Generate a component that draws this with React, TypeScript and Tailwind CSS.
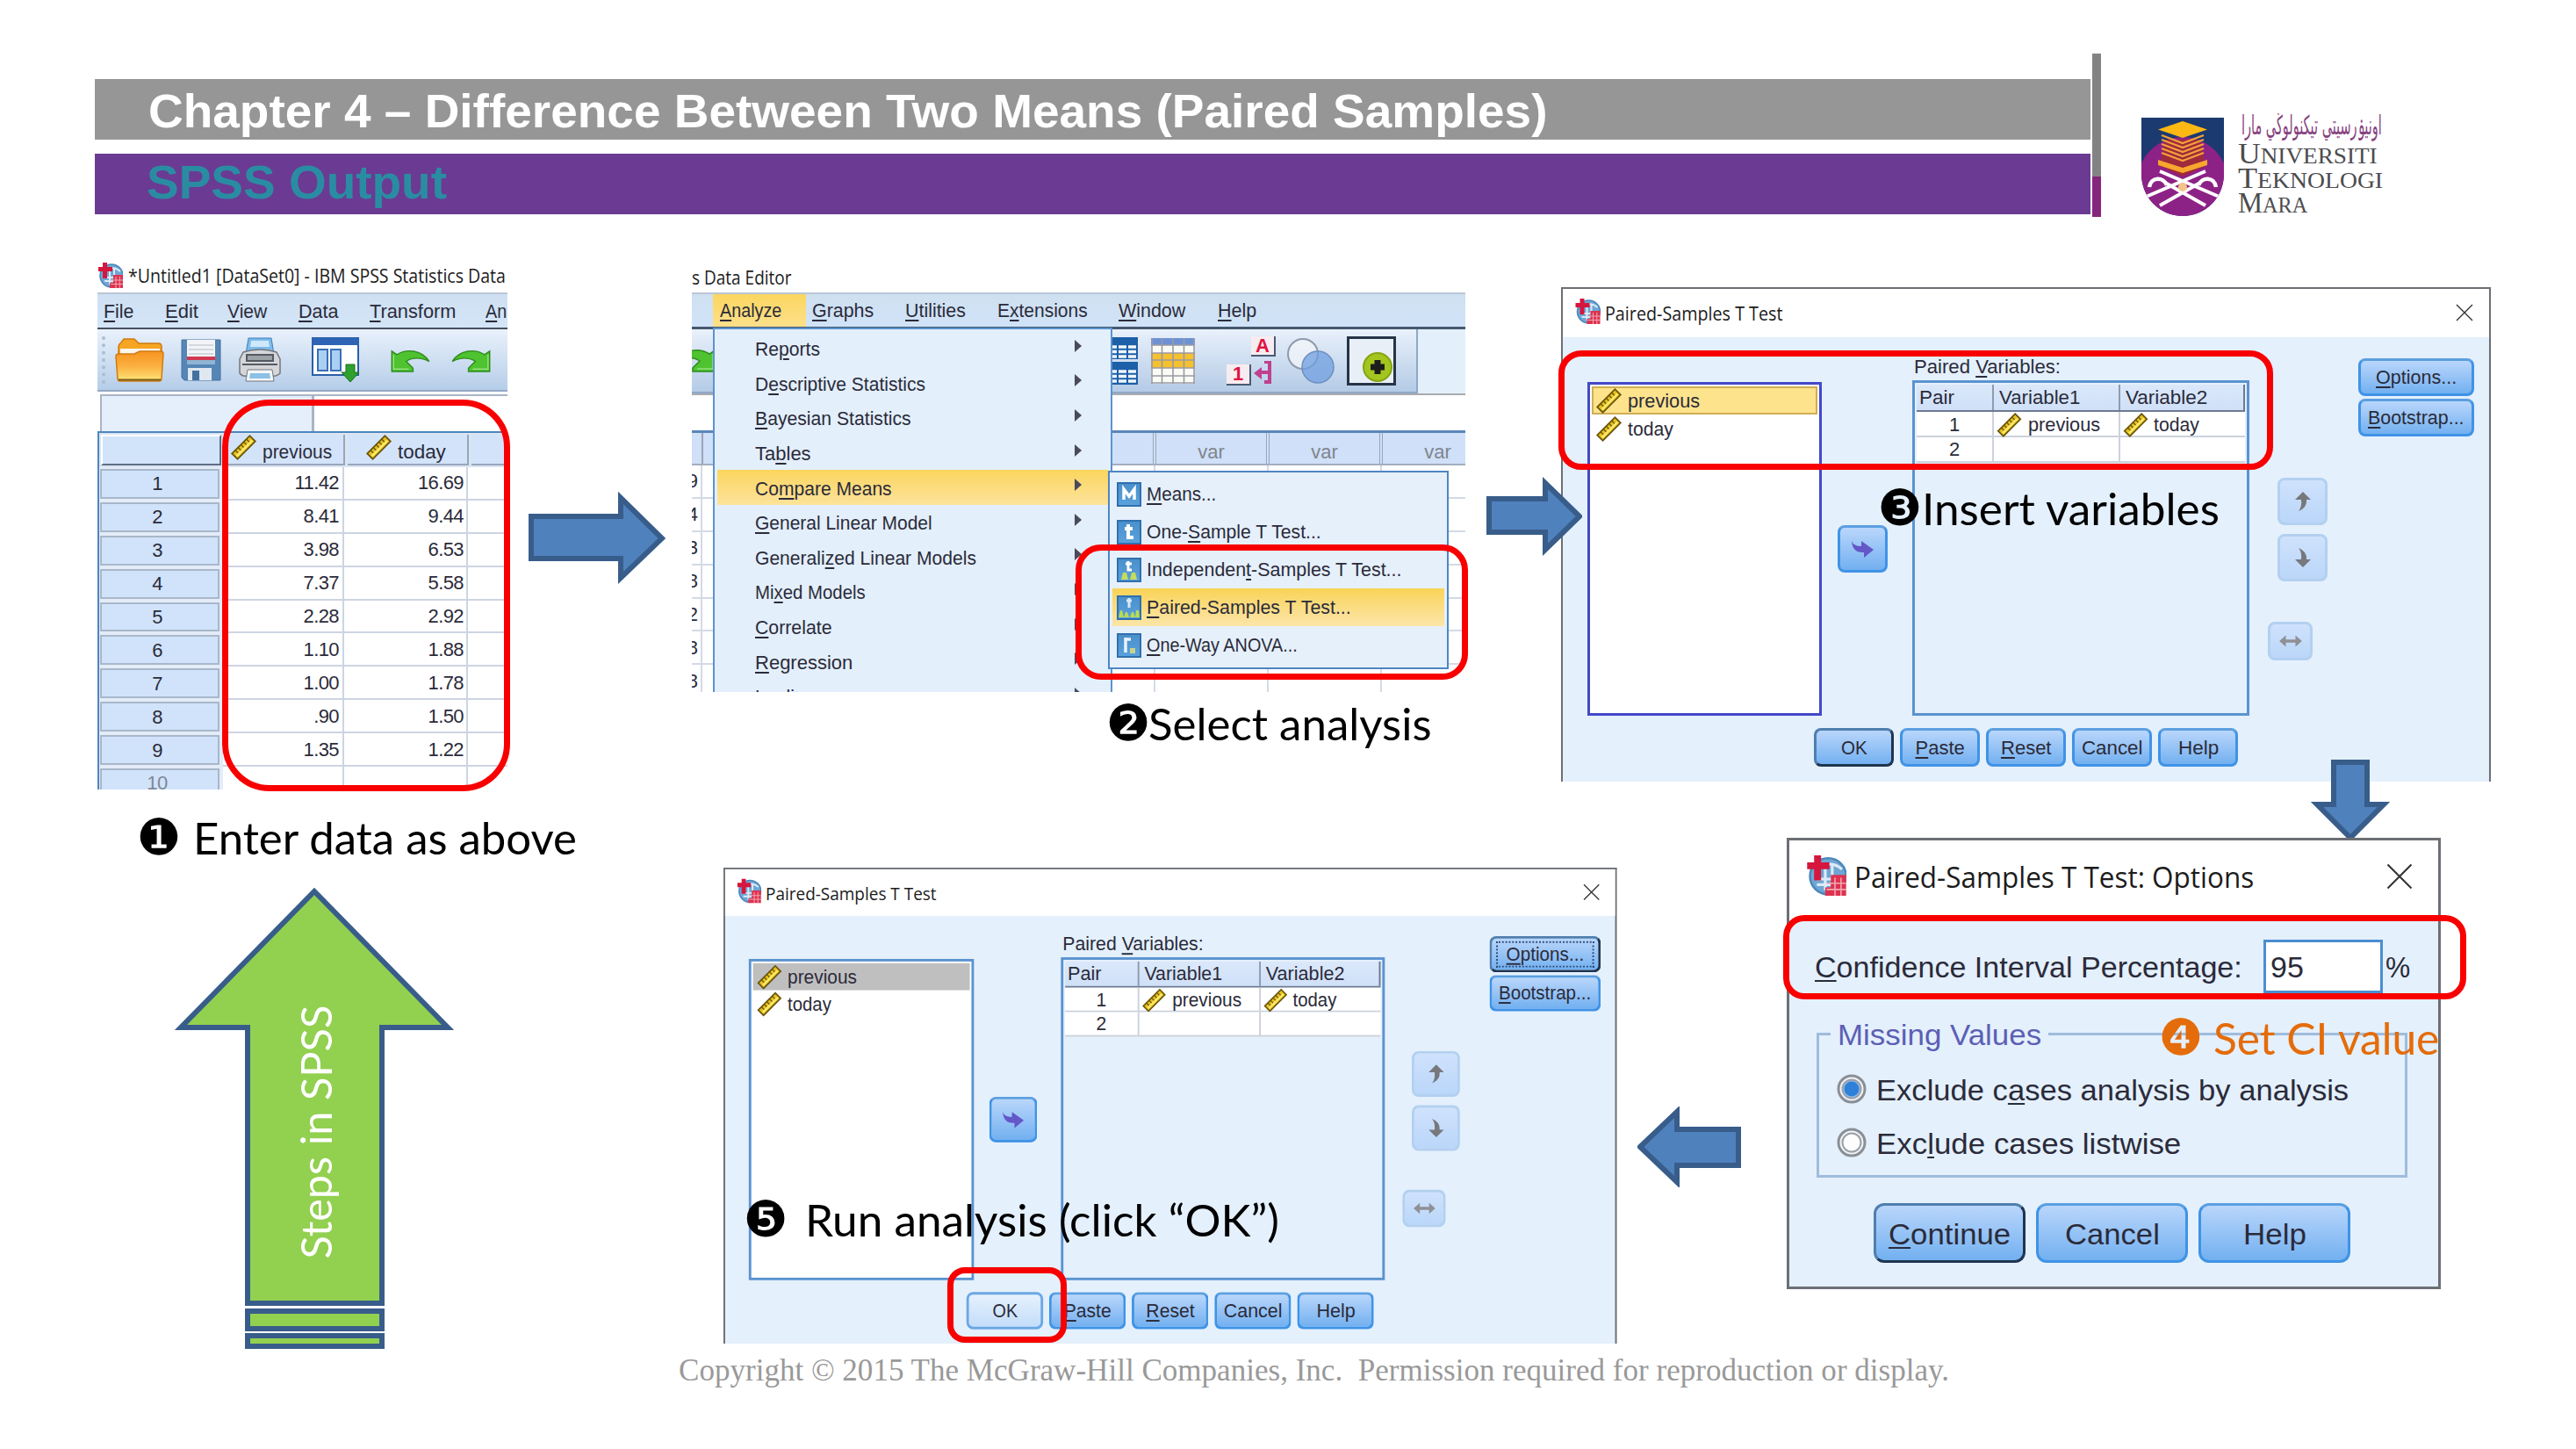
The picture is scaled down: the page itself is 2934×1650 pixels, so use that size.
import { useLayoutEffect, useRef, type ReactNode } from "react";

const SPSS = "font-['Liberation_Sans',Arial,sans-serif] text-[#2b2b3a]";
const WIN = "font-['Open_Sans','Noto_Sans',sans-serif] text-[#1c1c1c]";
const NOTE = "font-['Lato',sans-serif] text-[51px] leading-[60px]";

/* Stretches or squeezes a single line of text to the width of its box. */
function Fit({ className = "", children }: { className?: string; children: ReactNode }) {
  const box = useRef<HTMLSpanElement>(null);
  const line = useRef<HTMLSpanElement>(null);
  useLayoutEffect(() => {
    if (box.current && line.current) {
      const k = box.current.clientWidth / line.current.offsetWidth;
      line.current.style.transform = `scaleX(${k})`;
    }
  }, []);
  return (
    <span ref={box} className={`block shrink-0 whitespace-nowrap ${className}`}>
      <span ref={line} className="inline-block origin-left whitespace-pre">
        {children}
      </span>
    </span>
  );
}

/* Text whose letter after "&" is the underlined keyboard mnemonic. */
function Key({ t }: { t: string }) {
  const i = t.indexOf("&");
  if (i < 0) return <>{t}</>;
  return (
    <>
      {t.slice(0, i)}
      <span className="underline decoration-2 underline-offset-[3px]">{t[i + 1]}</span>
      {t.slice(i + 2)}
    </>
  );
}

function AppIcon({ className }: { className: string }) {
  return (
    <svg viewBox="0 0 28 29" className={`shrink-0 ${className}`}>
      <circle cx="15" cy="15" r="13" fill="#6ea6d4" stroke="#4a86ba" strokeWidth="1.5" />
      <path d="M8 9q9-6 17 1M7 17h12M7 21h10M13 9v16M18 7v9" stroke="#dcebf7" strokeWidth="2" fill="none" />
      <path d="M5 0h5v5h6v5h-6v8H5v-8H0V5h5z" fill="#d5163d" />
      <path d="M17 14h11v15H13v-6h4z" fill="#dd3350" />
      <path d="M14 20h14M14 24.500h14M20 16v13M24.300 16v13" stroke="#f5a6b2" strokeWidth="1" />
    </svg>
  );
}

function Ruler({ className = "h-[28px] w-[28px]" }: { className?: string }) {
  return (
    <svg viewBox="0 0 28 28" className={`shrink-0 overflow-visible ${className}`}>
      <g transform="rotate(-45 14 14)">
        <rect x="-2" y="9" width="32" height="10" fill="#e6c01e" stroke="#6b560c" strokeWidth="2" />
        <rect x="0" y="14" width="28" height="3" fill="#fbe96a" />
        <path d="M4 9v5M9 9v5M14 9v5M19 9v5M24 9v5" stroke="#6b560c" strokeWidth="1.5" />
      </g>
    </svg>
  );
}

function CloseX({ className }: { className: string }) {
  return (
    <svg viewBox="0 0 20 20" className={`shrink-0 ${className}`}>
      <path d="M1 1l18 18M19 1L1 19" stroke="#333" strokeWidth="1.4" />
    </svg>
  );
}

function BlockArrow({ className, box, points }: { className: string; box: string; points: string }) {
  return (
    <svg viewBox={box} className={`shrink-0 ${className}`}>
      <polygon points={points} fill="#4f81bd" stroke="#385d8a" strokeWidth="6" strokeLinejoin="miter" />
    </svg>
  );
}

function Undo({ flip = false, className }: { flip?: boolean; className: string }) {
  return (
    <svg viewBox="0 0 46 28" className={`shrink-0 ${flip ? "-scale-x-100" : ""} ${className}`}>
      <path d="M1 2l6 4C18-1 36 0 45 14 36 9 25 9 18 14l8 8v4H1z" fill="#4ec32f" stroke="#2e8c1d" strokeWidth="1.5" />
      <path d="M3 6v17h18" stroke="#93e07c" strokeWidth="1.500" fill="none" />
    </svg>
  );
}

const data: [string, string][] = [
  ["11.42", "16.69"],
  ["8.41", "9.44"],
  ["3.98", "6.53"],
  ["7.37", "5.58"],
  ["2.28", "2.92"],
  ["1.10", "1.88"],
  ["1.00", "1.78"],
  [".90", "1.50"],
  ["1.35", "1.22"],
  ["", ""],
];

function Folder() {
  return (
    <svg viewBox="0 0 56 50" className="h-[50px] w-[56px]">
      <defs>
        <linearGradient id="fold" x1="0" y1="0" x2="0" y2="1">
          <stop offset="0" stopColor="#f79420" />
          <stop offset=".5" stopColor="#fbb040" />
          <stop offset="1" stopColor="#fde67a" />
        </linearGradient>
      </defs>
      <path d="M4 10q0-3 3-5l3-4h12l5 5h23q3 0 3 4v12H4z" fill="#f6a623" stroke="#d07b12" strokeWidth="1.5" />
      <path d="M6 12h45v12H6z" fill="#fbf6ee" />
      <path d="M1 21q0-3 3-3h18l6-3h24q3 0 3 3l-2 28q0 3-3 3H6q-3 0-3-3z" fill="url(#fold)" stroke="#d07b12" strokeWidth="1.5" />
      <path d="M4 47.500h48" stroke="#7b5a16" strokeWidth="2" />
    </svg>
  );
}
function Floppy() {
  return (
    <svg viewBox="0 0 46 48" className="h-[48px] w-[46px]">
      <path d="M1 1h44v46H4l-3-3z" fill="#5586b5" stroke="#44719f" />
      <rect x="7" y="1" width="32" height="26" fill="#f2f4f7" />
      <path d="M9 7h28M9 12h28M9 17h28" stroke="#c9ced6" strokeWidth="1.500" />
      <rect x="7" y="20" width="32" height="4" fill="#d23752" />
      <rect x="7" y="24" width="32" height="5" fill="#8fb4d4" />
      <rect x="8" y="33" width="27" height="14" fill="#dfe8f0" />
      <rect x="13" y="36" width="8" height="11" fill="#44719f" />
    </svg>
  );
}
function Printer() {
  return (
    <svg viewBox="0 0 48 52" className="h-[52px] w-[48px]">
      <path d="M11 1h26l3 18H8z" fill="#7cbbec" stroke="#3f7fb5" />
      <path d="M14 4h20l1 7H13z" fill="#cfe8fa" />
      <path d="M5 17q19-6 38 0l4 8v16q-4 4-8 3H9q-5 1-8-3V25z" fill="#d4d6da" stroke="#74777d" strokeWidth="1.500" />
      <path d="M9 20h30v7H9zM4 31h40" stroke="#555a62" strokeWidth="2" fill="#9da1a8" />
      <path d="M10 37h28l2 13H8z" fill="#f4f6f8" stroke="#74777d" />
      <path d="M13 41h22l1 6H12z" fill="#8cc0e6" />
    </svg>
  );
}
function DataIcon() {
  return (
    <svg viewBox="0 0 56 52" className="h-[52px] w-[56px]">
      <rect x="1" y="1" width="52" height="42" fill="#fff" stroke="#2c5fa8" strokeWidth="2" />
      <rect x="1" y="1" width="52" height="8" fill="#2f63b5" />
      <path d="M7 14h11v24H7zM22 14h11v24H22z" fill="#a9cff3" stroke="#3b6fb8" strokeWidth="2" />
      <path d="M39 31h10v9h5L44 51 34 40h5z" fill="#2ea12e" stroke="#1c6f1c" />
    </svg>
  );
}

function DataEditor() {
  const menu = ["&File", "&Edit", "&View", "&Data", "&Transform", "&Analyze"];
  const w = ["w-[70px]", "w-[71px]", "w-[81px]", "w-[81px]", "w-[132px]", "w-[100px]"];
  const t = ["w-[34px]", "w-[38px]", "w-[45px]", "w-[45px]", "w-[98px]", "w-[70px]"];
  return (
    <div className="relative h-[606px] w-[467px]">
      <div className="flex h-full w-full flex-col overflow-hidden">
        <div className="flex h-[40px] shrink-0 items-center gap-[6px] pl-px">
          <AppIcon className="h-[29px] w-[28px]" />
          <Fit className={`${WIN} w-[430px] pt-[2px] text-[21px] leading-[30px]`}>*Untitled1 [DataSet0] - IBM SPSS Statistics Data</Fit>
        </div>
        <div className={`${SPSS} flex h-[42px] shrink-0 items-center border-t-2 border-b-2 border-t-[#b9c6d6] border-b-[#45505f] bg-gradient-to-b from-[#cfe0f2] to-[#d3e5f8] pl-[7px] text-[22px]`}>
          {menu.map((m, i) => (
            <div key={m} className={`shrink-0 ${w[i]}`}>
              <Fit className={t[i]}>
                <Key t={m} />
              </Fit>
            </div>
          ))}
        </div>
        <div className="flex h-[71px] shrink-0 items-center border-b-2 border-[#94a8c4] bg-gradient-to-b from-[#e9f1fb] to-[#b6cee9]">
          <div className="ml-[5px] h-[54px] w-[4px] border-l-4 border-dotted border-[#a9bdd4]" />
          <div className="ml-[11px] flex items-center">
            <Folder />
            <span className="w-[19px]" />
            <Floppy />
            <span className="w-[20px]" />
            <Printer />
            <span className="w-[35px]" />
            <DataIcon />
            <span className="w-[33px]" />
            <Undo className="mt-1 h-[27px] w-[47px]" />
            <span className="w-[22px]" />
            <Undo flip className="mt-1 h-[27px] w-[47px]" />
          </div>
        </div>
        <div className="flex h-[45px] shrink-0 pt-[3px]">
          <div className="ml-[3px] w-[243px] border-2 border-b-0 border-[#aab4c4] bg-[#e5effb]" />
          <div className="flex-1 border-t-2 border-l border-[#aab4c4] bg-white" />
        </div>
        <div className={`${SPSS} flex flex-col border-t-2 border-l-2 border-[#4d86bd] bg-white text-[22px]`}>
          <div className="flex h-[39px] shrink-0 bg-[#dbe5f2]">
            <div className="my-[2px] ml-[2px] w-[137px] border-2 border-t-white border-r-[#5f6e86] border-b-[#5f6e86] border-l-white bg-[#d2e4fa]" />
            <div className="my-[2px] ml-[5px] flex w-[136px] items-center border-r-2 border-b-2 border-[#98a6bb] bg-[#d3e4fa] pt-[6px] pl-[8px]">
              <Ruler className="mt-[-10px] h-[25px] w-[25px]" />
              <Fit className="ml-[9px] w-[79px]">previous</Fit>
            </div>
            <div className="my-[2px] ml-[3px] flex w-[138px] items-center border-r-2 border-b-2 border-[#98a6bb] bg-[#d3e4fa] pt-[6px] pl-[23px]">
              <Ruler className="mt-[-10px] h-[25px] w-[25px]" />
              <Fit className="ml-[9px] w-[55px]">today</Fit>
            </div>
            <div className="my-[2px] ml-[3px] flex-1 border-b-2 border-[#98a6bb] bg-[#d3e4fa]" />
          </div>
          {data.map(([a, b], i) => (
            <div key={i} className="flex h-[37.900px] shrink-0 tracking-[-0.6px]">
              <div className="w-[141px] bg-[#e3ecf7] py-[2px] pr-[4px] pl-px">
                <div className={`flex h-full items-center justify-center border-2 border-[#a9b7cb] bg-[#d0e3fa] pr-[6px] ${i === 9 ? "text-[#7d8796]" : ""}`}>{i + 1}</div>
              </div>
              <div className="flex w-[138px] items-center justify-end border-r-2 border-b-2 border-[#cdd4e2] pr-[4px]">{a}</div>
              <div className="flex w-[141px] items-center justify-end border-r-2 border-b-2 border-[#cdd4e2] pr-[3px]">{b}</div>
              <div className="flex-1 border-b-2 border-[#cdd4e2]" />
            </div>
          ))}
        </div>
      </div>
      <div className="absolute top-[162px] left-[142px] h-[446px] w-[328px] rounded-[54px] border-[7px] border-[#f80000]" />
    </div>
  );
}

function TableIcon({ kind }: { kind: "blue" | "gold" }) {
  return kind === "blue" ? (
    <svg viewBox="0 0 29 54" className="h-[54px] w-[29px]">
      <rect width="29" height="25" fill="#1d5fa8" />
      <rect y="28" width="29" height="26" fill="#1d5fa8" />
      {[11, 16.500, 22, 39, 44.500, 50].map((y) => (
        <path key={y} d={`M0 ${y}h5M7 ${y}h9M18 ${y}h9`} stroke="#eef5fc" strokeWidth="3.400" />
      ))}
    </svg>
  ) : (
    <svg viewBox="0 0 50 52" className="h-[52px] w-[50px]">
      <rect width="50" height="52" fill="#fbfbf6" />
      <rect width="50" height="8" fill="#6e92d6" />
      <rect y="17" width="50" height="17" fill="#f5c12e" />
      <path d="M0 8h50M0 17h50M0 25h50M0 34h50M0 43h50M1 0v52M12.500 0v52M25 0v52M37.500 0v52M49 0v52M0 51h50" stroke="#9a9aa5" strokeWidth="1.600" />
    </svg>
  );
}

const analyze = [
  "Re&ports",
  "D&escriptive Statistics",
  "&Bayesian Statistics",
  "Ta&bles",
  "Co&mpare Means",
  "&General Linear Model",
  "Generali&zed Linear Models",
  "Mi&xed Models",
  "&Correlate",
  "&Regression",
  "L&oglinear",
];
const analyzeW = ["w-[74px]", "w-[194px]", "w-[178px]", "w-[64px]", "w-[156px]", "w-[202px]", "w-[252px]", "w-[126px]", "w-[87px]", "w-[111px]", "w-[88px]"];
const tests = ["&Means...", "One-&Sample T Test...", "Independen&t-Samples T Test...", "&Paired-Samples T Test...", "&One-Way ANOVA..."];
const testsW = ["w-[79px]", "w-[199px]", "w-[290px]", "w-[233px]", "w-[172px]"];

function TestIcon({ n }: { n: number }) {
  return (
    <svg viewBox="0 0 28 28" className="h-[28px] w-[28px] shrink-0">
      <defs>
        <linearGradient id="ti" x1="0" y1="0" x2="0" y2="1">
          <stop offset="0" stopColor="#4a8fc9" />
          <stop offset="1" stopColor="#5aa2dc" />
        </linearGradient>
      </defs>
      <rect x="1" y="1" width="26" height="26" fill="url(#ti)" stroke="#3070ae" strokeWidth="2" />
      {n === 0 && <path d="M8 20V8l6 8 6-8v12" fill="none" stroke="#fff" strokeWidth="3.500" />}
      {n === 1 && <path d="M13 5v15h6M9 10h9" fill="none" stroke="#fff" strokeWidth="4" />}
      {n === 2 && (
        <>
          <path d="M13 4v10h4M10 7h7" fill="none" stroke="#fff" strokeWidth="3" />
          <path d="M5 25l2-8h4l2 8zM15 25l2-8h4l2 8z" fill="#c6dd5a" />
        </>
      )}
      {n === 3 && (
        <>
          <path d="M14 3v11M11 6h6" fill="none" stroke="#d7e9f7" strokeWidth="3" />
          <path d="M2 25l2-8h2l2 8zM8 25l2-6h2l2 6zM15 25l2-6h2l2 6zM21 25l1-8h3l1 8z" fill="#b9dc50" />
        </>
      )}
      {n === 4 && (
        <>
          <path d="M10 5v17M10 7h6" fill="none" stroke="#e8f3fb" strokeWidth="3.500" />
          <rect x="15" y="17" width="6" height="6" fill="#c9d58a" />
        </>
      )}
    </svg>
  );
}

function AnalyzeMenu() {
  return (
    <div className="relative h-[491px] w-[881px]">
      <div className={`${SPSS} relative flex h-full w-full flex-col overflow-hidden bg-white text-[22px]`}>
        <div className="flex h-[36px] shrink-0 items-center">
          <Fit className={`${WIN} w-[114px] pt-px text-[21px] leading-[30px]`}>s Data Editor</Fit>
        </div>
        <div className="flex h-[42px] shrink-0 items-stretch border-t-2 border-b-[3px] border-t-[#b9c6d6] border-b-[#45586f] bg-gradient-to-b from-[#cfe0f0] to-[#d0e3f8] leading-[37px]">
          <div className="ml-[24px] w-[106px] bg-gradient-to-b from-[#fbd65e] to-[#fde08a] pl-[8px]">
            <Fit className="w-[70px]"><Key t="&Analyze" /></Fit>
          </div>
          <div className="w-[113px] pl-[7px]"><Fit className="w-[70px]"><Key t="&Graphs" /></Fit></div>
          <div className="w-[105px]"><Fit className="w-[69px]"><Key t="&Utilities" /></Fit></div>
          <div className="w-[138px]"><Fit className="w-[103px]"><Key t="E&xtensions" /></Fit></div>
          <div className="w-[113px]"><Fit className="w-[76px]"><Key t="&Window" /></Fit></div>
          <div><Fit className="w-[44px]"><Key t="&Help" /></Fit></div>
        </div>
        <div className="flex h-[73px] shrink-0 bg-[#e3effb]">
          <div className="flex w-[827px] items-center border-r-2 border-b-2 border-[#8fa8c8] bg-gradient-to-b from-[#e9f1fb] to-[#b4cbe6]">
            <Undo flip className="ml-[-20px] h-[28px] w-[48px]" />
            <div className="ml-[451px] flex items-center">
              <TableIcon kind="blue" />
              <span className="w-[15px]" />
              <TableIcon kind="gold" />
              <span className="w-[36px]" />
              <div className="relative h-[56px] w-[56px] font-bold text-[#e0123f]">
                <div className="absolute top-0 right-0 flex h-[23px] w-[28px] items-center justify-center border-r-2 border-b-2 border-[#4b5a73] bg-[#f7ecf0]">A</div>
                <div className="absolute bottom-0 left-0 flex h-[24px] w-[28px] items-center justify-center border-r-2 border-b-2 border-[#4b5a73] bg-[#f7ecf0]">1</div>
                <svg viewBox="0 0 22 26" className="absolute right-[4px] bottom-[2px] h-[26px] w-[22px]">
                  <path d="M13 1h6v23h-6M19 13H9" fill="none" stroke="#c0408f" strokeWidth="4" />
                  <path d="M10 7v14L1 14z" fill="#c0408f" />
                </svg>
              </div>
              <svg viewBox="0 0 54 52" className="ml-[13px] h-[52px] w-[54px]">
                <circle cx="18" cy="18" r="17" fill="#f3f6fa" fillOpacity=".7" stroke="#8e99ab" strokeWidth="2" />
                <circle cx="35" cy="33" r="18" fill="#6f9fe0" fillOpacity=".75" stroke="#6d8fbd" strokeWidth="1.500" />
              </svg>
              <svg viewBox="0 0 56 56" className="ml-[14px] h-[56px] w-[56px]">
                <rect x="1.500" y="1.500" width="53" height="53" fill="#e9eff7" stroke="#263447" strokeWidth="3" />
                <circle cx="35" cy="35" r="16" fill="#a3c61e" stroke="#86a414" strokeWidth="2" />
                <path d="M35 27v16M27 35h16" stroke="#1d1d1d" strokeWidth="7" />
              </svg>
            </div>
          </div>
        </div>
        <div className="h-[45px] shrink-0 border-t-2 border-b-[3px] border-t-[#a9a9b0] border-b-[#5b86b8] bg-white" />
        <div className="flex h-[37px] shrink-0 border-b-2 border-[#a3aec0] bg-[#cfe0f8] text-[#80858e]">
          <div className="w-[13px] shrink-0 border-r-2 border-[#9aa5b8]" />
          <div className="w-[516px] shrink-0 border-r-4 border-double border-[#9aa5b8]" />
          {[0, 1, 2].map((i) => (
            <div key={i} className="flex w-[129px] shrink-0 items-center justify-center border-r-4 border-double border-[#9aa5b8] pt-2">
              var
            </div>
          ))}
        </div>
        {data.slice(0, 7).map(([, b], i) => (
          <div key={b} className="flex h-[37.900px] shrink-0">
            <div className="flex w-[10px] shrink-0 items-center justify-end overflow-hidden border-b-2 border-[#d3dae6] pr-[3px] whitespace-nowrap">{b}</div>
            <div className="w-[518px] shrink-0 border-r-2 border-b-2 border-l-2 border-[#d3dae6]" />
            <div className="w-[129px] shrink-0 border-r-2 border-b-2 border-[#d3dae6]" />
            <div className="w-[129px] shrink-0 border-r-2 border-b-2 border-[#d3dae6]" />
            <div className="flex-1 border-b-2 border-[#d3dae6]" />
          </div>
        ))}

        <div className="absolute top-[76px] left-[24px] w-[455px] border-2 border-[#5c93cf] bg-[#e3effb] px-[3px] pt-[2px]">
          {analyze.map((t, i) => (
            <div
              key={t}
              className={`flex h-[39.600px] items-center justify-between pr-[30px] pl-[43px] ${i === 4 ? "bg-gradient-to-b from-[#fbd55c] to-[#fde39a]" : ""}`}
            >
              <Fit className={`${analyzeW[i]} pt-[2px]`}>
                <Key t={t} />
              </Fit>
              <svg viewBox="0 0 8 14" className="mt-[-6px] h-[14px] w-[8px]">
                <path d="M0 0l8 7-8 7z" fill="#4a4a5a" />
              </svg>
            </div>
          ))}
        </div>

        <div className="absolute top-[239px] left-[474px] h-[226px] w-[388px] border-2 border-[#4f86c2] bg-[#e6f0fb] px-[3px] pt-[3px]">
          {tests.map((t, i) => (
            <div key={t} className={`flex h-[43px] items-center gap-[6px] pl-[5px] ${i === 3 ? "bg-gradient-to-b from-[#f9d354] to-[#fce6a8]" : ""}`}>
              <TestIcon n={i} />
              <Fit className={testsW[i]}>
                <Key t={t} />
              </Fit>
            </div>
          ))}
        </div>
      </div>
      <div className="absolute top-[323px] left-[437px] h-[154px] w-[447px] rounded-[29px] border-[7px] border-[#f80000]" />
    </div>
  );
}

const BTN = "flex shrink-0 items-center justify-center rounded-[8px] border-[3px]";
const BLUE = "border-[#3f93e6] border-t-[#5b9fe0] bg-gradient-to-b from-[#b9d6fb] to-[#72b0f0]";
const DARK = "border-[#4f7fae] border-r-[#1f3550] border-b-[#1f3550] bg-gradient-to-b from-[#b9d6fb] to-[#72b0f0]";
const PALE = "border-[#b3d0f0] bg-gradient-to-b from-[#cfe2fc] to-[#bad6f9]";

function PushArrow({ dir, className }: { dir: "up" | "down" | "right" | "both"; className: string }) {
  return (
    <svg viewBox="0 0 28 24" className={className}>
      {dir === "right" && <path d="M1 3q2 6 11 6V3l14 10-11 9v-6Q2 17 1 3z" fill="#6457c8" />}
      {dir === "up" && <path d="M14 1l9 9h-5q1 9-9 13 4-5 3-13H5z" fill="#77787c" />}
      {dir === "down" && <path d="M14 23l9-9h-5Q19 5 9 1q4 5 3 13H5z" fill="#77787c" />}
      {dir === "both" && <path d="M0 12l8-7v5h12V5l8 7-8 7v-5H8v5z" fill="#8f9096" />}
    </svg>
  );
}

function PairedDialog({ done = false }: { done?: boolean }) {
  const listBorder = done ? "border-[#5b93d0]" : "border-[#4448c8]";
  const selected = done ? "bg-[#bfbfbf]" : "border-2 border-[#cfae55] bg-[#fde38c]";
  const footW = ["w-[56px]", "w-[57px]", "w-[69px]", "w-[46px]"];
  return (
    <div className={`${SPSS} flex h-[563px] w-[1059px] flex-col border-2 border-b-0 border-[#6c6f74] bg-[#e4f0fc] text-[22px]`}>
      <div className="flex h-[55px] shrink-0 items-start bg-white pl-[14px]">
        <AppIcon className="mt-[11px] h-[29px] w-[29px]" />
        <Fit className={`${WIN} mt-[13px] ml-[5px] w-[203px] text-[21px] leading-[30px]`}>Paired-Samples T Test</Fit>
        <CloseX className="mt-[17px] mr-[18px] ml-auto h-[20px] w-[20px]" />
      </div>
      <div className="flex h-[431px] shrink-0 pl-[28px]">
        <div className={`mt-[51px] w-[267px] shrink-0 border-[3px] ${listBorder} bg-white p-[2px]`}>
          <div className={`flex h-[32px] items-center ${done ? "pl-[7px]" : "pl-[5px]"} ${selected}`}>
            <Ruler className="h-[25px] w-[25px]" />
            <Fit className="ml-[9px] w-[82px]">previous</Fit>
          </div>
          <div className="flex h-[32px] items-center pl-[7px]">
            <Ruler className="h-[25px] w-[25px]" />
            <Fit className="ml-[9px] w-[52px]">today</Fit>
          </div>
        </div>
        <div className={`${BTN} ${BLUE} mt-[214px] ml-[18px] h-[54px] w-[57px]`}>
          <PushArrow dir="right" className="h-[24px] w-[28px]" />
        </div>
        <div className="ml-[28px] flex w-[384px] shrink-0 flex-col">
          <Fit className="mt-[19px] ml-[2px] h-[30px] w-[167px] leading-[30px]">
            <Key t="Paired &Variables:" />
          </Fit>
          <div className="flex-1 border-[3px] border-[#5b93d0] p-[2px]">
            <div className="grid grid-cols-[88px_144px_142px] border-b-2 border-[#6d7b91] bg-gradient-to-b from-[#dbe8fa] to-[#cfe0f8] leading-[29px]">
              <div className="border-r-2 border-[#8e9bb0] pl-[3px]"><Fit className="w-[40px]">Pair</Fit></div>
              <div className="border-r-2 border-[#8e9bb0] pl-[6px]"><Fit className="w-[92px]">Variable1</Fit></div>
              <div className="border-r-2 border-[#6d7b91] pl-[6px]"><Fit className="w-[93px]">Variable2</Fit></div>
            </div>
            <div className="grid h-[29px] grid-cols-[88px_144px_142px] border-b-2 border-[#ccd2dc] bg-white leading-[29px]">
              <div className="border-r-2 border-[#ccd2dc] text-center">1</div>
              <div className="flex items-center border-r-2 border-[#ccd2dc] pl-[5px]">
                <Ruler className="h-[24px] w-[25px]" />
                <Fit className="ml-[9px] w-[82px]">previous</Fit>
              </div>
              <div className="flex items-center pl-[5px]">
                <Ruler className="h-[24px] w-[25px]" />
                <Fit className="ml-[8px] w-[52px]">today</Fit>
              </div>
            </div>
            <div className="grid h-[29px] grid-cols-[88px_144px_142px] border-b-2 border-[#ccd2dc] bg-white leading-[28px]">
              <div className="border-r-2 border-[#ccd2dc] text-center">2</div>
              <div className="border-r-2 border-[#ccd2dc]" />
              <div />
            </div>
          </div>
        </div>
        <div className="ml-[21px] w-[68px] shrink-0 pt-[160px]">
          <div className={`${BTN} ${PALE} ml-[11px] h-[54px] w-[57px]`}>
            <PushArrow dir="up" className="h-[24px] w-[28px]" />
          </div>
          <div className={`${BTN} ${PALE} mt-[10px] ml-[11px] h-[54px] w-[57px]`}>
            <PushArrow dir="down" className="h-[24px] w-[28px]" />
          </div>
          <div className={`${BTN} ${PALE} mt-[46px] h-[44px] w-[51px]`}>
            <PushArrow dir="both" className="h-[22px] w-[28px]" />
          </div>
        </div>
        <div className="ml-[35px] w-[132px] shrink-0 pt-[24px]">
          <div className={`${BTN} ${done ? DARK : BLUE} h-[43px]`}>
            <span className={done ? "flex h-[31px] w-[116px] items-center justify-center border-2 border-dotted border-[#2c4c78]" : ""}>
              <Fit className="w-[92px]"><Key t="&Options..." /></Fit>
            </span>
          </div>
          <div className={`${BTN} ${BLUE} mt-[3px] h-[43px]`}>
            <Fit className="w-[110px]"><Key t="&Bootstrap..." /></Fit>
          </div>
        </div>
      </div>
      <div className="mt-[14px] flex gap-[7px] pl-[286px]">
        <div className={`${BTN} h-[44px] w-[91px] ${done ? "border-[#6ba8e4] bg-gradient-to-b from-[#e6f1fd] to-[#c3ddfa]" : DARK}`}>
          <Fit className="w-[30px]">OK</Fit>
        </div>
        {["&Paste", "&Reset", "Cancel", "Help"].map((t, i) => (
          <div key={t} className={`${BTN} ${BLUE} h-[44px] w-[91px]`}>
            <Fit className={footW[i]}><Key t={t} /></Fit>
          </div>
        ))}
      </div>
    </div>
  );
}

function Radio({ on = false }: { on?: boolean }) {
  return (
    <svg viewBox="0 0 34 34" className="h-[34px] w-[34px] shrink-0">
      <circle cx="17" cy="17" r="15" fill="#f2f4f6" stroke="#8a8f96" strokeWidth="3" />
      <circle cx="17" cy="17" r="10.500" fill={on ? "#8fbdf0" : "#fdfdfd"} stroke="#9aa0a8" strokeWidth="2" />
      {on && <circle cx="17" cy="17" r="8.500" fill="#2f80d8" />}
    </svg>
  );
}

function OptionsDialog() {
  return (
    <div className={`${SPSS} flex h-[514px] w-[745px] flex-col border-[3px] border-[#6c6f74] bg-[#e4f0fc] text-[34px]`}>
      <div className="flex h-[91px] shrink-0 items-start bg-white pl-[20px]">
        <AppIcon className="mt-[17px] h-[46px] w-[45px]" />
        <Fit className={`${WIN} mt-[19px] ml-[9px] w-[455px] text-[32px] leading-[46px]`}>Paired-Samples T Test: Options</Fit>
        <CloseX className="mt-[26px] mr-[29px] ml-auto h-[30px] w-[30px]" />
      </div>
      <div className="mt-[21px] flex h-[62px] shrink-0 items-center pl-[29px]">
        <Fit className="mt-[3px] w-[487px]"><Key t="&Confidence Interval Percentage:" /></Fit>
        <div className="ml-[24px] flex h-[61px] w-[136px] items-center border-[3px] border-[#4a8ed0] bg-white pt-[3px] pl-[5px]">
          <Fit className="w-[38px]">95</Fit>
        </div>
        <Fit className="mt-[3px] ml-[3px] w-[28px]">%</Fit>
      </div>
      <fieldset className="mt-[26px] ml-[31px] h-[184px] w-[673px] shrink-0 border-[3px] border-[#9fbcdc]">
        <legend className="ml-[13px] h-[40px] px-[8px] leading-[43px] text-[#5c5fb4]">
          <Fit className="w-[232px]">Missing Values</Fit>
        </legend>
        <div className="mt-[21px] flex h-[44px] items-center pl-[20px]">
          <Radio on />
          <Fit className="ml-[11px] w-[538px] pt-[2px]"><Key t="Exclude c&ases analysis by analysis" /></Fit>
        </div>
        <div className="mt-[17px] flex h-[44px] items-center pl-[20px]">
          <Radio />
          <Fit className="ml-[11px] w-[347px] pt-[2px]"><Key t="Exc&lude cases listwise" /></Fit>
        </div>
      </fieldset>
      <div className="mt-[29px] flex gap-[12px] pl-[96px]">
        <div className={`${BTN} ${DARK} h-[68px] w-[173px] rounded-[12px]`}><Fit className="w-[139px] pt-[3px]"><Key t="&Continue" /></Fit></div>
        <div className={`${BTN} ${BLUE} h-[68px] w-[173px] rounded-[12px]`}><Fit className="w-[108px] pt-[3px]">Cancel</Fit></div>
        <div className={`${BTN} ${BLUE} h-[68px] w-[173px] rounded-[12px]`}><Fit className="w-[72px] pt-[3px]">Help</Fit></div>
      </div>
    </div>
  );
}

/* Numbered caption: filled circled digit followed by a line of text. */
function Note({ n, gap, width, className = "" }: { n: string; gap: string; width: string; className?: string }) {
  const texts: Record<string, string> = {
    "❶": "Enter data as above",
    "❷": "Select analysis",
    "❸": "Insert variables",
    "❹": "Set CI value",
    "❺": "Run analysis (click “OK”)",
  };
  return (
    <div className={`flex h-[60px] items-center ${NOTE} ${className}`}>
      <span className="flex w-[40px] shrink-0 justify-center pb-[2px] font-['DejaVu_Sans',sans-serif] text-[57px] leading-[60px]">{n}</span>
      <Fit className={`${gap} ${width}`}>{texts[n]}</Fit>
    </div>
  );
}

function Crest() {
  return (
    <svg viewBox="0 0 96 114" className="h-[114px] w-[96px] shrink-0">
      <clipPath id="shield">
        <path d="M1 1h94v64c0 28-22 48-47 48S1 93 1 65z" />
      </clipPath>
      <g clipPath="url(#shield)">
        <rect width="96" height="114" fill="#1b3a70" />
        <circle cx="48" cy="75" r="52" fill="#8d2286" />
        <path d="M28 26h40l6 30-26 12-26-12z" fill="#9e2a3c" />
        {[24, 29, 34, 39, 44].map((y) => (
          <path key={y} d={`M24 ${y - 3}l24 9 24-9`} fill="none" stroke="#f4a03a" strokeWidth="2.200" />
        ))}
        <path d="M20 49l28 9 28-9v6l-28 9-28-9z" fill="#f7a62e" />
        <path d="M20 14.500L48 5l28 9.500L48 24z" fill="#fdb813" />
        <path d="M4 92l70-30M92 92L22 62M22 101l46-26M74 101L28 75" stroke="#fff" strokeWidth="4" fill="none" />
        <path d="M10 80c2-12 16-12 20-2M86 80c-2-12-16-12-20-2" stroke="#fff" strokeWidth="4.500" fill="none" />
        <circle cx="48" cy="80" r="5" fill="#f3c58a" />
      </g>
    </svg>
  );
}

function Header() {
  return (
    <header className="flex h-[293px] shrink-0 items-start pl-[108px]">
      <div className="mt-[90px] w-[2273px] shrink-0 font-['Liberation_Sans',Arial,sans-serif] text-[54px] font-bold">
        <div className="h-[69px] bg-[#969696] pl-[61px] leading-[73px] text-white">
          <Fit className="w-[1593px]">Chapter 4 – Difference Between Two Means (Paired Samples)</Fit>
        </div>
        <div className="mt-[16px] h-[69px] bg-[#6b3a93] pl-[59px] leading-[65px] text-[#2a8ca3]">
          <Fit className="w-[342px]">SPSS Output</Fit>
        </div>
      </div>
      <div className="mt-[61px] ml-[2px] w-[10px] shrink-0">
        <div className="h-[140px] bg-[#838383]" />
        <div className="h-[46px] bg-[#86257c]" />
      </div>
      <div className="mt-[133px] ml-[45px] flex">
        <Crest />
        <div className="mt-[-6px] ml-[15px] font-['Liberation_Serif',serif] text-[#4c4c4f]">
          <Fit className="ml-[4px] h-[34px] w-[160px] font-['DejaVu_Sans',sans-serif] text-[30px] leading-[32px] text-[#87417f]">اونيۏرسيتي تيكنولوڬي مارا</Fit>
          <Fit className="h-[28px] w-[159px] text-[26px] leading-[28px]"><span className="text-[34px] leading-[28px]">U</span>NIVERSITI</Fit>
          <Fit className="h-[28px] w-[165px] text-[26px] leading-[28px]"><span className="text-[34px] leading-[28px]">T</span>EKNOLOGI</Fit>
          <Fit className="h-[28px] w-[79px] text-[26px] leading-[28px]"><span className="text-[34px] leading-[28px]">M</span>ARA</Fit>
        </div>
      </div>
    </header>
  );
}

function StepsArrow() {
  return (
    <div className="relative h-[530px] w-[324px]">
      <svg viewBox="0 0 324 530" className="h-full w-full">
        <g fill="#92d050" stroke="#385d8a" strokeWidth="6">
          <path d="M162 9L314 164H239V478H86V164H10z" />
          <rect x="86" y="487" width="153" height="20" />
          <rect x="86" y="515" width="153" height="12" />
        </g>
      </svg>
      <div className="absolute top-[138px] left-[132px] flex h-[290px] w-[60px] items-center justify-center">
        <div className="-rotate-90 font-['Lato',sans-serif] text-[49px] leading-[60px] text-white">
          <Fit className="w-[289px]">Steps in SPSS</Fit>
        </div>
      </div>
    </div>
  );
}

export default function App() {
  return (
    <div className="flex h-[1650px] w-[2934px] flex-col overflow-hidden bg-white">
      <Header />
      <main className="flex flex-1 items-start">
        <section className="w-[602px] shrink-0 pl-[111px]">
          <DataEditor />
          <Note n="❶" gap="ml-[19px]" width="w-[437px]" className="mt-[25px] ml-[50px]" />
          <div className="mt-[22px] ml-[85px]">
            <StepsArrow />
          </div>
        </section>

        <section className="flex flex-1 flex-col">
          <div className="flex h-[661px] shrink-0 items-start">
            <BlockArrow className="mt-[266px] h-[108px] w-[156px]" box="0 0 156 108" points="3,29 105,29 105,8 152,54 105,99 105,77 3,77" />
            <div className="mt-[4px] ml-[30px] w-[881px] shrink-0">
              <AnalyzeMenu />
              <Note n="❷" gap="ml-[3px]" width="w-[323px]" className="mt-[6px] ml-[477px]" />
            </div>
            <BlockArrow className="z-10 mt-[248px] -mr-[24px] ml-[24px] h-[94px] w-[109px]" box="0 0 109 94" points="3,27 67,27 67,9 106,47 67,85 67,65 3,65" />
            <div className="relative mt-[34px] shrink-0">
              <PairedDialog />
              <div className="absolute top-[72px] left-[-3px] h-[136px] w-[814px] rounded-[26px] border-[7px] border-[#f80000]" />
              <Note n="❸" gap="ml-[5px]" width="w-[339px]" className="absolute top-[222px] left-[366px]" />
              <BlockArrow className="absolute top-[536px] left-[853px] h-[96px] w-[92px]" box="0 0 92 96" points="27,5 65,5 65,53 84,53 46,91 8,53 27,53" />
            </div>
          </div>

          <div className="flex h-[578px] shrink-0 items-start pl-[223px]">
            <div className="relative mt-[34px] ml-[-1px] h-[542px] w-[1018px] shrink-0">
              <div className="h-[563px] w-[1059px] origin-top-left scale-x-[.9608] scale-y-[.9627]">
                <PairedDialog done />
              </div>
              <div className="absolute top-[455px] left-[255px] h-[86px] w-[136px] rounded-[20px] border-[7px] border-[#f80000]" />
              <Note n="❺" gap="ml-[25px]" width="w-[540px]" className="absolute top-[371px] left-[28px]" />
            </div>
            <BlockArrow className="mt-[306px] ml-[23px] h-[92px] w-[120px]" box="0 0 120 92" points="3,46 45,6 45,26 115,26 115,67 45,67 45,86" />
            <div className="relative ml-[50px] shrink-0">
              <OptionsDialog />
              <div className="absolute top-[88px] left-[-4px] h-[96px] w-[778px] rounded-[24px] border-[7px] border-[#f80000]" />
              <Note n="❹" gap="ml-[17px]" width="w-[257px]" className="absolute top-[198px] left-[429px] text-[#e46c0a]" />
            </div>
          </div>

          <footer className="mt-[5px] pl-[171px]">
            <Fit className="w-[1447px] font-['Liberation_Serif',serif] text-[36px] leading-[46px] text-[#999999]">
              {"Copyright © 2015 The McGraw-Hill Companies, Inc.  Permission required for reproduction or display."}
            </Fit>
          </footer>
        </section>
      </main>
    </div>
  );
}
